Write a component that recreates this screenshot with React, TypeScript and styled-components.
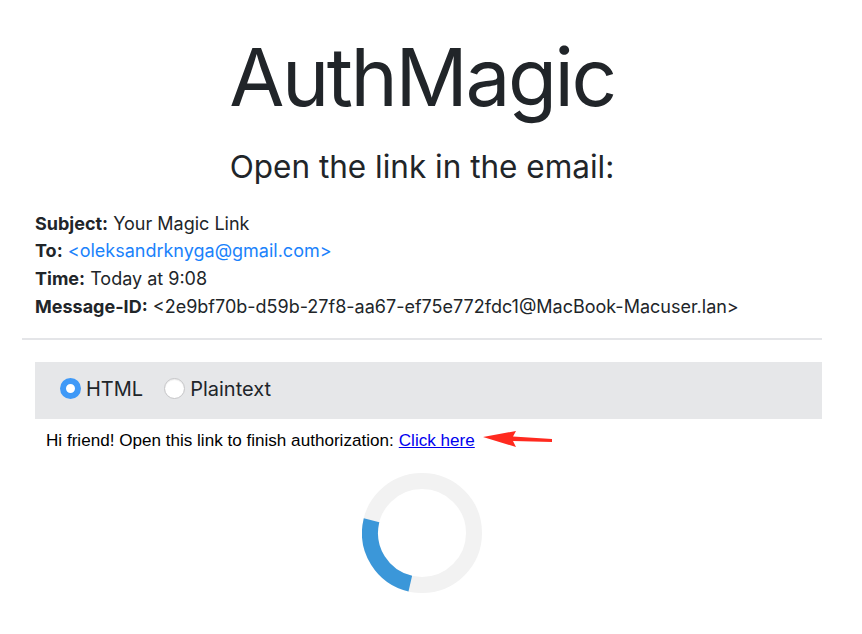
import { useState } from "react";
import styled, { createGlobalStyle } from "styled-components";

const GlobalStyle = createGlobalStyle`
  html, body {
    margin: 0;
    padding: 0;
    background: #ffffff;
  }
  body {
    font-family: Inter, "Noto Sans", "Liberation Sans", sans-serif;
    color: #212529;
  }
`;

const Page = styled.div`
  width: 800px;
  margin-left: 22px;
  display: flex;
  flex-direction: column;
`;

const Title = styled.h1`
  margin: 29px 0 0;
  font-size: 80px;
  font-weight: 400;
  line-height: 1.2;
  text-align: center;
  letter-spacing: -2.4px;
`;

const Subtitle = styled.h2`
  margin: 23px 0 0;
  font-size: 31.5px;
  font-weight: 400;
  line-height: 1.2;
  text-align: center;
`;

const Headers = styled.div`
  margin-top: 24px;
  padding-left: 13px;
  font-size: 18px;
  line-height: 27.6px;
`;

const HeaderRow = styled.div`
  white-space: nowrap;
`;

const HeaderLabel = styled.b`
  font-weight: 700;
`;

const Email = styled.span`
  color: #1a82fb;
`;

const Divider = styled.hr`
  margin: 18px 0 0;
  border: 0;
  border-top: 2px solid #e4e5e8;
`;

const Toolbar = styled.div`
  margin: 22px 0 0 13px;
  height: 57px;
  box-sizing: border-box;
  padding: 0 0 4px 25px;
  background: #e6e7e9;
  display: flex;
  align-items: center;
  gap: 21px;
`;

const RadioLabel = styled.label`
  display: flex;
  align-items: center;
  gap: 5px;
  font-size: 20px;
  color: #212529;
  cursor: pointer;
`;

const RadioDot = styled.span<{ $checked: boolean }>`
  width: 21px;
  height: 21px;
  border-radius: 50%;
  box-sizing: border-box;
  background: #ffffff;
  border: ${(p) => (p.$checked ? "6.5px solid #3f99f7" : "1px solid #c5c5c7")};
  box-shadow: ${(p) => (p.$checked ? "none" : "inset 0 1px 1px rgba(0,0,0,0.08)")};
`;

const Body = styled.div`
  margin: 12px 0 0 24px;
  display: flex;
  align-items: center;
  font-family: "Liberation Sans", Arial, sans-serif;
  font-size: 17.1px;
  color: #000000;
`;

const Link = styled.a`
  color: #0000ee;
  text-decoration: underline;
  margin-left: 5px;
`;

const Arrow = styled.svg`
  margin-left: 7px;
  margin-top: -3px;
`;

const SpinnerWrap = styled.div`
  display: flex;
  justify-content: center;
  margin-top: 22px;
`;

const Spinner = () => {
  const r = 52;
  const c = 2 * Math.PI * r;
  const arc = (91 / 360) * c;
  return (
    <svg width="120" height="120" viewBox="0 0 120 120">
      <circle cx="60" cy="60" r={r} fill="none" stroke="#f2f2f2" strokeWidth="16" />
      <circle
        cx="60"
        cy="60"
        r={r}
        fill="none"
        stroke="#3b97d9"
        strokeWidth="16"
        strokeDasharray={`${arc} ${c}`}
        transform="rotate(103 60 60)"
      />
    </svg>
  );
};

export default function App() {
  const [mode, setMode] = useState<"html" | "text">("html");

  return (
    <>
      <GlobalStyle />
      <Page>
        <Title>AuthMagic</Title>
        <Subtitle>Open the link in the email:</Subtitle>
        <Headers>
          <HeaderRow>
            <HeaderLabel>Subject:</HeaderLabel> Your Magic Link
          </HeaderRow>
          <HeaderRow>
            <HeaderLabel>To:</HeaderLabel> <Email>&lt;oleksandrknyga@gmail.com&gt;</Email>
          </HeaderRow>
          <HeaderRow>
            <HeaderLabel>Time:</HeaderLabel> Today at 9:08
          </HeaderRow>
          <HeaderRow>
            <HeaderLabel>Message-ID:</HeaderLabel>{" "}
            &lt;2e9bf70b-d59b-27f8-aa67-ef75e772fdc1@MacBook-Macuser.lan&gt;
          </HeaderRow>
        </Headers>
        <Divider />
        <Toolbar>
          <RadioLabel onClick={() => setMode("html")}>
            <RadioDot $checked={mode === "html"} />
            HTML
          </RadioLabel>
          <RadioLabel onClick={() => setMode("text")}>
            <RadioDot $checked={mode === "text"} />
            Plaintext
          </RadioLabel>
        </Toolbar>
        <Body>
          Hi friend! Open this link to finish authorization:
          <Link href="#">Click here</Link>
          <Arrow width="72" height="18" viewBox="0 0 72 18">
            <polygon points="1,6 34,0 31,5.5 70,8 70,11 31,10 34,16" fill="#ff2a1f" />
          </Arrow>
        </Body>
        <SpinnerWrap>
          <Spinner />
        </SpinnerWrap>
      </Page>
    </>
  );
}
